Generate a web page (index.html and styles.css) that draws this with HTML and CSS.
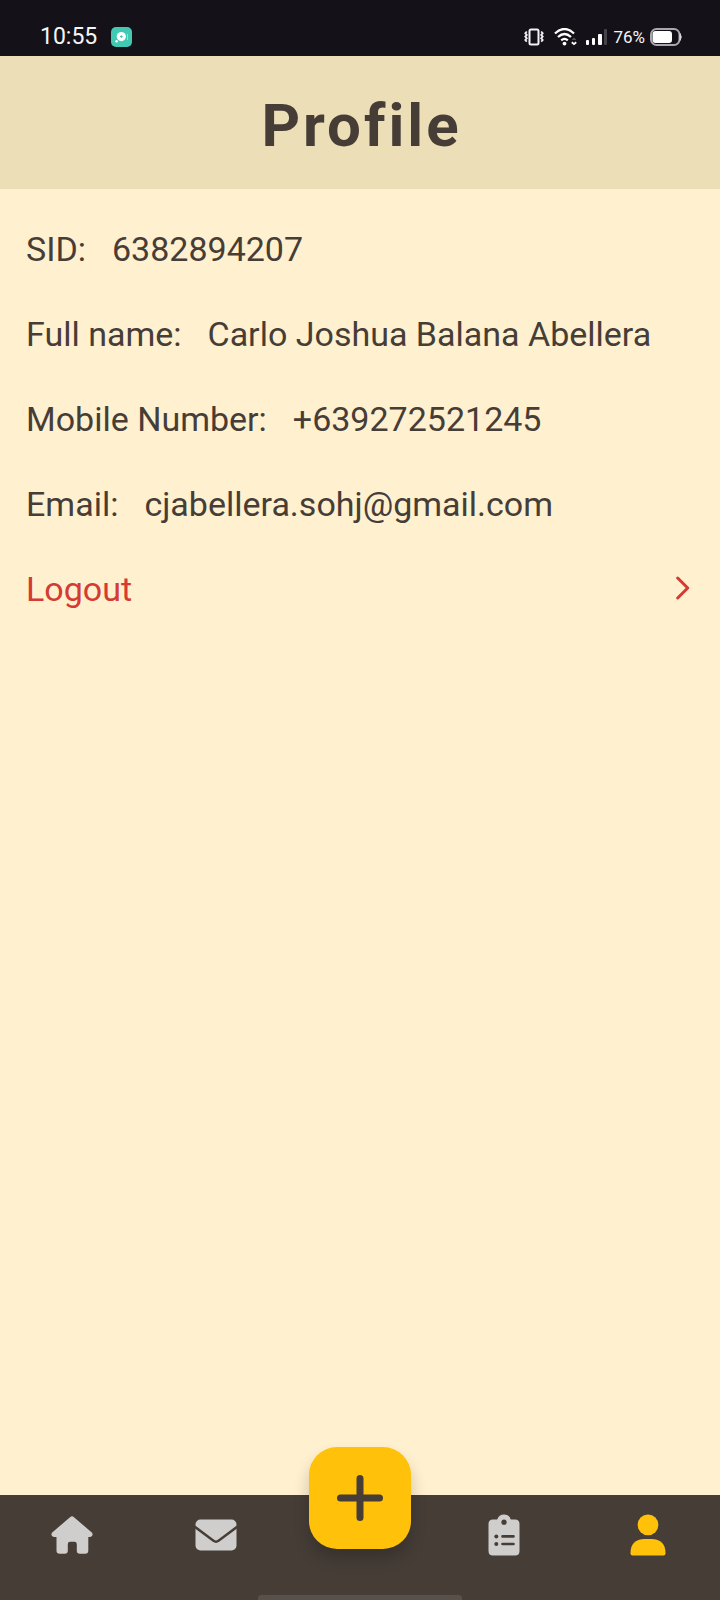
FILE: index.html
```html
<!DOCTYPE html>
<html lang="en">
<head>
<meta charset="utf-8">
<meta name="viewport" content="width=device-width, initial-scale=1">
<title>Profile</title>
<link rel="stylesheet" href="styles.css">
</head>
<body>
<div class="screen">
  <div class="status">
    <div class="status-left">
      <span class="time">10:55</span>
      <svg width="21" height="20" viewBox="0 0 21 20" aria-hidden="true">
        <rect width="21" height="20" rx="5" fill="#42c9b4"/>
        <path d="M16.500 7v6" stroke="#8fe0d3" stroke-width="1"/>
        <circle cx="10.300" cy="9.600" r="4.600" fill="#fff"/>
        <circle cx="5.600" cy="14.200" r="1.300" fill="#fff"/>
        <path d="M8.900 9.600h2.800M10.300 8.200V11" stroke="#42c9b4" stroke-width="1"/>
      </svg>
    </div>
    <div class="status-right">
      <svg class="vibrate" width="20" height="18" viewBox="0 0 20 18" fill="none" stroke="#f2f2f4" aria-hidden="true">
        <rect x="5.500" y="1.500" width="9" height="15" rx="1.500" stroke-width="2"/>
        <path d="M2.800 3.500 1.300 5.200l1.500 1.700-1.500 1.700 1.500 1.700-1.500 1.700 1.500 1.700M17.200 3.500l1.500 1.700-1.500 1.700 1.500 1.700-1.500 1.700 1.500 1.700-1.500 1.700" stroke-width="1.800"/>
      </svg>
      <svg class="wifi" width="24" height="18" viewBox="0 0 24 18" fill="none" stroke="#fff" stroke-width="2.300" aria-hidden="true">
        <path d="M1 5.500Q10.500-3.500 20 5.500M4 9q6.500-6 13 0M7.200 12.300q3.300-2.800 6.600 0"/>
        <circle cx="10.500" cy="15.600" r="1.900" fill="#fff" stroke="none"/>
        <path d="M17.600 12 20 9.500l2.400 2.500z" fill="#55525a" stroke="none"/>
        <path d="m17.800 14.200 2.200 1.900 2.200-1.900" stroke-width="1.800"/>
      </svg>
      <svg width="22" height="18" viewBox="0 0 22 18" aria-hidden="true">
        <g fill="#fff"><rect y="12" width="3" height="5" rx="1"/><rect x="6" y="10" width="3" height="7" rx="1"/><rect x="12" y="6" width="4" height="11" rx="1"/></g>
        <rect x="18" y="1" width="3" height="16" rx="1" fill="#46434b"/>
      </svg>
      <span class="percent">76%</span>
      <svg width="33" height="18" viewBox="0 0 33 18" aria-hidden="true">
        <rect x="1" y="1" width="28.500" height="16" rx="5.500" fill="none" stroke="#aaa8ae" stroke-width="2"/>
        <path d="M30 5.500q2.500 3.500 0 7z" fill="#d8d7da" stroke="#d8d7da"/>
        <rect x="2.500" y="3" width="19.500" height="12" rx="3" fill="#fff"/>
      </svg>
    </div>
  </div>

  <header class="header"><h1 class="title">Profile</h1></header>

  <main class="content">
    <dl class="details">
      <div class="row"><dt>SID:</dt><dd>6382894207</dd></div>
      <div class="row"><dt>Full name:</dt><dd>Carlo Joshua Balana Abellera</dd></div>
      <div class="row"><dt>Mobile Number:</dt><dd>+639272521245</dd></div>
      <div class="row"><dt>Email:</dt><dd>cjabellera.sohj@gmail.com</dd></div>
    </dl>
    <button class="logout" type="button">
      <span>Logout</span>
      <svg width="14" height="26" viewBox="0 0 14 26" fill="none" stroke="currentColor" stroke-width="3" stroke-linecap="round" stroke-linejoin="round" aria-hidden="true"><path d="m1.700 2 10 10-10 10"/></svg>
    </button>
  </main>

  <nav class="nav" aria-label="Main">
    <button class="tab" type="button" aria-label="Home">
      <svg width="42" height="38" viewBox="0 0 42 38" fill="#d0cecc" aria-hidden="true"><path d="M19.300.900q1.700-1.400 3.400 0L40.800 16.600q1.200 1.300.6 2.700-.6 1.700-2.600 1.700h-1.500v13.500q0 3.200-3.200 3.200H28.800q-3 0-3-3v-6.500q0-2.400-2.400-2.400h-4.200q-2.400 0-2.400 2.400v6.500q0 3-3 3H8.700q-3.200 0-3.200-3.200V21H3.200Q1.200 21 .6 19.300 0 17.900 1.200 16.600z"/></svg>
    </button>
    <button class="tab" type="button" aria-label="Messages">
      <svg width="42" height="32" viewBox="0 0 42 32" aria-hidden="true"><rect x=".500" y=".500" width="41" height="31" rx="5" fill="#d0cecc"/><path d="m-.5 7.500 19 14.300q2.500 1.800 5 0l19-14.300" fill="none" stroke="#463d37" stroke-width="2.400"/></svg>
    </button>
    <button class="add" type="button" aria-label="Add">
      <svg width="46" height="46" viewBox="0 0 46 46" fill="none" stroke="#463d37" stroke-width="7" stroke-linecap="round" aria-hidden="true"><path d="M23 3.500v39M3.500 23h39"/></svg>
    </button>
    <button class="tab" type="button" aria-label="Tasks">
      <svg width="32" height="42" viewBox="0 0 32 42" aria-hidden="true">
        <path d="M5 5.500h4.200Q11 .5 16 .5t6.800 5H27q4.500 0 4.500 4.500v27q0 4.500-4.500 4.500H5Q.5 41.500.5 37V10Q.5 5.500 5 5.500z" fill="#d0cecc"/>
        <g fill="#463d37"><circle cx="16" cy="8.200" r="2.600"/><circle cx="8.300" cy="22.400" r="2"/><circle cx="8.300" cy="30" r="2"/></g>
        <path d="M14.500 22.400h11M14.500 30h11" stroke="#463d37" stroke-width="2.600" stroke-linecap="round"/>
      </svg>
    </button>
    <button class="tab" type="button" aria-label="Profile" aria-current="page">
      <svg width="36" height="42" viewBox="0 0 36 42" fill="#ffc10a" aria-hidden="true"><circle cx="18" cy="10.800" r="10.400"/><path d="M14.500 25h7Q35.500 25.500 35.500 39v.5q0 2-2 2h-31q-2 0-2-2V39q0-13.500 14-14z"/></svg>
    </button>
    <span class="home-bar"></span>
  </nav>
</div>
</body>
</html>
```
FILE: styles.css
```css
* { box-sizing: border-box; }

body {
  margin: 0;
  background: #fff0cf;
  color: #463d37;
  font-family: Roboto, "Liberation Sans", sans-serif;
}

button {
  padding: 0;
  border: 0;
  background: none;
  color: inherit;
  font: inherit;
  cursor: pointer;
}

svg { display: block; flex: none; }

.screen {
  display: flex;
  flex-direction: column;
  min-height: 100vh;
}

.status {
  display: flex;
  align-items: flex-end;
  justify-content: space-between;
  height: 56px;
  padding: 0 37px 7px 40px;
  background: #141218;
  color: #f5f5f7;
}

.status-left,
.status-right {
  display: flex;
  align-items: center;
  line-height: 24px;
}

.status-left { gap: 14px; }
.status-right { gap: 5px; }
.vibrate { margin-right: 5px; }
.wifi { margin-right: 3px; }

.time { font-size: 23px; }
.percent { font-size: 17px; }

.header {
  padding: 34px 24px 27px;
  background: #ecdfb8;
  text-align: center;
}

.title {
  margin: 0;
  font-size: 60px;
  font-weight: 700;
  line-height: 72px;
  letter-spacing: 3px;
  text-indent: 3px;
}

.content {
  flex: 1;
  padding: 40px 26px;
  font-size: 34px;
  line-height: 40px;
}

.details,
.row {
  display: flex;
}

.details {
  flex-direction: column;
  gap: 45px;
  margin: 0 0 45px;
}

.row { gap: 26px; }
.row dd { margin: 0; }

.logout {
  display: flex;
  align-items: center;
  justify-content: space-between;
  width: 100%;
  padding-right: 4px;
  color: #d33b33;
}

.nav {
  position: relative;
  display: grid;
  grid-template-columns: repeat(5, 1fr);
  height: 105px;
  background: #463d37;
}

.tab {
  display: flex;
  align-items: center;
  justify-content: center;
  height: 80px;
}

.add {
  display: flex;
  align-items: center;
  justify-content: center;
  justify-self: center;
  width: 102px;
  height: 102px;
  margin-top: -48px;
  border-radius: 28px;
  background: #ffc10a;
  box-shadow: 0 10px 16px rgba(0, 0, 0, 0.2);
}

.home-bar {
  position: absolute;
  bottom: 0;
  left: 50%;
  width: 204px;
  height: 5px;
  border-radius: 3px 3px 0 0;
  background: #58504a;
  transform: translateX(-50%);
}
```
